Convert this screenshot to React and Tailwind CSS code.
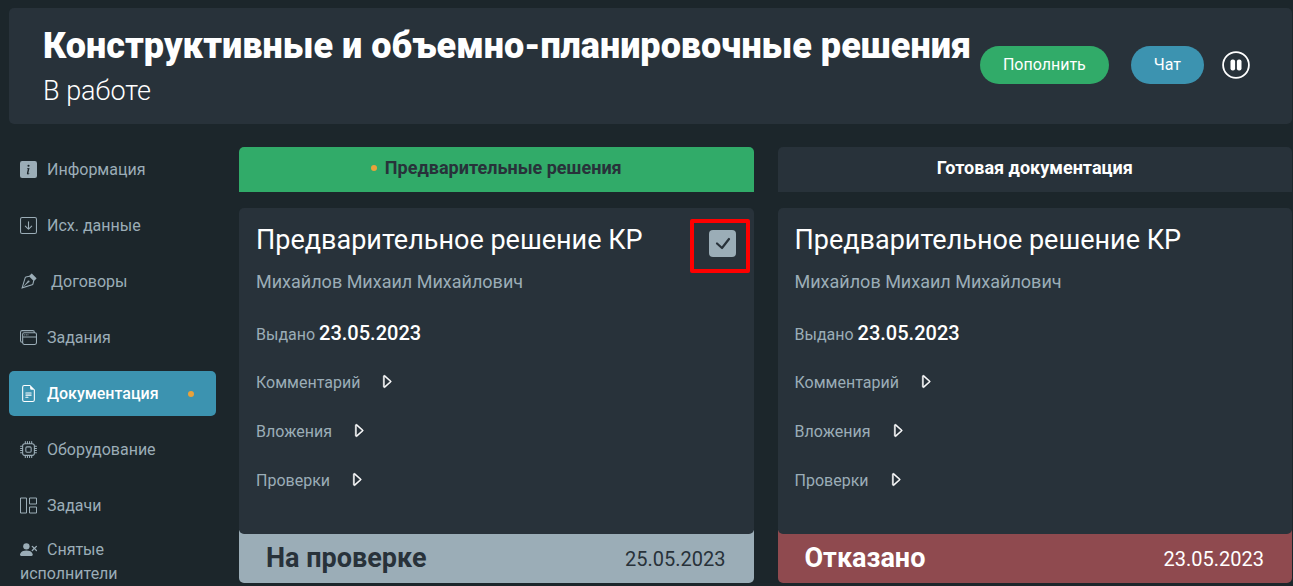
import {
  BsArrowDownSquare,
  BsCaretRight,
  BsCpu,
  BsFileEarmarkText,
  BsInfoSquareFill,
  BsVectorPen,
  BsWindowStack,
} from "react-icons/bs";

function TasksIcon({ className }) {
  return (
    <svg viewBox="0 0 17 16" fill="none" stroke="currentColor" className={className} aria-hidden="true">
      <path d="M.5.5h6v15h-6zM9.5.5h7v6h-7zM9.5 9.5h7v6h-7z" />
    </svg>
  );
}

function RemovedUserIcon({ className }) {
  return (
    <svg viewBox="0 0 16 16" fill="currentColor" className={className} aria-hidden="true">
      <circle cx="6" cy="5" r="3" />
      <path d="M1 14s-1 0-1-1 1-4 6-4 6 3 6 4-1 1-1 1z" />
      <path
        fillRule="evenodd"
        d="M11.146 4.646a.6.6 0 0 1 .854 0L13.5 6.146l1.5-1.5a.6.6 0 0 1 .854.854L14.354 7l1.5 1.5a.6.6 0 0 1-.854.854L13.5 7.854 12 9.354a.6.6 0 0 1-.854-.854L12.646 7l-1.5-1.5a.6.6 0 0 1 0-.854z"
      />
    </svg>
  );
}

const navItems = [
  { label: "Информация", Icon: BsInfoSquareFill },
  { label: "Исх. данные", Icon: BsArrowDownSquare },
  { label: "Договоры", Icon: BsVectorPen, wide: true },
  { label: "Задания", Icon: BsWindowStack },
  { label: "Документация", Icon: BsFileEarmarkText, active: true },
  { label: "Оборудование", Icon: BsCpu },
  { label: "Задачи", Icon: TasksIcon },
  { label: "Снятые исполнители", Icon: RemovedUserIcon },
];

function NavItem({ label, Icon, active, wide }) {
  return (
    <li>
      <a
        href="#"
        aria-current={active ? "page" : undefined}
        className={`flex h-[45px] items-center rounded-[5px] pr-[22px] pl-[11px] leading-6 ${
          active ? "bg-[#3c93b0] font-medium text-white" : "text-[#9badb7]"
        }`}
      >
        <span className="flex-1">
          <Icon className={`inline size-[17px] align-[-3px] ${wide ? "mr-3.5" : "mr-2.5"}`} />
          {label}
        </span>
        {active && <span className="size-1.5 rounded-full bg-[#e9a23b]" />}
      </a>
    </li>
  );
}

function Disclosure({ label }) {
  return (
    <button type="button" className="flex items-center gap-[18px] leading-6 text-[#9badb7]">
      {label}
      <BsCaretRight className="mb-1 size-[17px] stroke-[0.5] text-white" />
    </button>
  );
}

function SolutionCard({ status, date, footerClass, checkable }) {
  return (
    <article>
      <div className="relative z-10 rounded-[5px] bg-[#28323a] px-[17px] pt-3 pb-[41px]">
        <h2 className="text-[27px] leading-10 text-white">Предварительное решение КР</h2>
        <p className="mt-2 text-lg leading-7 text-[#9badb7]">Михайлов Михаил Михайлович</p>
        <p className="mt-[23px] leading-7 text-[#9badb7]">
          Выдано <span className="text-xl leading-7 font-medium text-white">23.05.2023</span>
        </p>
        <div className="mt-[22px] flex flex-col items-start gap-[25px]">
          <Disclosure label="Комментарий" />
          <Disclosure label="Вложения" />
          <Disclosure label="Проверки" />
        </div>
        {checkable && (
          <div className="absolute top-[11px] right-1 flex h-[54px] w-[60px] items-center justify-center rounded-[2px] border-4 border-[#ff0000]">
            <label className="relative mt-[-5px] mr-[-5px] block size-[27px]">
              <input
                type="checkbox"
                defaultChecked
                aria-label="Предварительное решение КР"
                className="block size-full appearance-none rounded-[4px] bg-[#9badb7]"
              />
              <svg
                viewBox="0 0 27 27"
                fill="none"
                stroke="#28323a"
                strokeWidth="2.2"
                strokeLinecap="round"
                strokeLinejoin="round"
                className="pointer-events-none absolute inset-0"
              >
                <path d="M8 13.5l5 4.5L20 9" />
              </svg>
            </label>
          </div>
        )}
      </div>
      <footer className={`-mt-1 flex items-center justify-between rounded-b-[5px] pt-1 pr-7 pl-[27px] ${footerClass}`}>
        <strong className="text-[27px] leading-[49px] font-bold">{status}</strong>
        <time className="text-xl">{date}</time>
      </footer>
    </article>
  );
}

export default function App() {
  return (
    <div className="min-h-screen bg-[#1c262b] pt-2 pr-px pl-[9px] font-[Roboto,sans-serif] text-base">
      <header className="flex justify-between rounded-[5px] bg-[#28323a] pr-[42px] pl-[34px]">
        <div className="pt-3.5 pb-3 text-white">
          <h1 className="text-4xl leading-[48px] font-black">Конструктивные и объемно-планировочные решения</h1>
          <p className="text-[27px] leading-[42px] font-light">В работе</p>
        </div>
        <div className="flex items-center pb-[3px] text-white">
          <button type="button" className="mr-[22px] h-[38px] rounded-full bg-[#31ab69] px-[23px]">
            Пополнить
          </button>
          <button type="button" className="mr-[18px] h-[38px] rounded-full bg-[#3c93b0] px-[23px]">
            Чат
          </button>
          <button type="button" aria-label="Пауза">
            <svg viewBox="0 0 28 28" className="size-7" fill="none">
              <circle cx="14" cy="14" r="12.9" stroke="currentColor" strokeWidth="1.8" />
              <rect x="8.5" y="8.5" width="4.6" height="11" rx="2" fill="currentColor" />
              <rect x="14.9" y="8.5" width="4.6" height="11" rx="2" fill="currentColor" />
            </svg>
          </button>
        </div>
      </header>

      <div className="mt-[23px] flex gap-[23px]">
        <nav className="w-[207px] shrink-0">
          <ul className="flex flex-col gap-[11px]">
            {navItems.map((item) => (
              <NavItem key={item.label} {...item} />
            ))}
          </ul>
        </nav>

        <main className="grid flex-1 grid-cols-2 content-start gap-x-6 gap-y-4">
          <button
            type="button"
            className="flex h-[45px] items-center justify-center gap-2 rounded-t-[5px] bg-[#31ab69] pb-1 text-lg font-bold text-[#28323a]"
          >
            <span className="size-1.5 rounded-full bg-[#e9a23b]" />
            Предварительные решения
          </button>
          <button
            type="button"
            className="flex h-[45px] items-center justify-center rounded-t-[5px] bg-[#28323a] pb-1 text-lg font-bold text-white"
          >
            Готовая документация
          </button>
          <SolutionCard status="На проверке" date="25.05.2023" footerClass="bg-[#9badb7] text-[#28323a]" checkable />
          <SolutionCard status="Отказано" date="23.05.2023" footerClass="bg-[#8f4a4f] text-white" />
        </main>
      </div>
    </div>
  );
}
